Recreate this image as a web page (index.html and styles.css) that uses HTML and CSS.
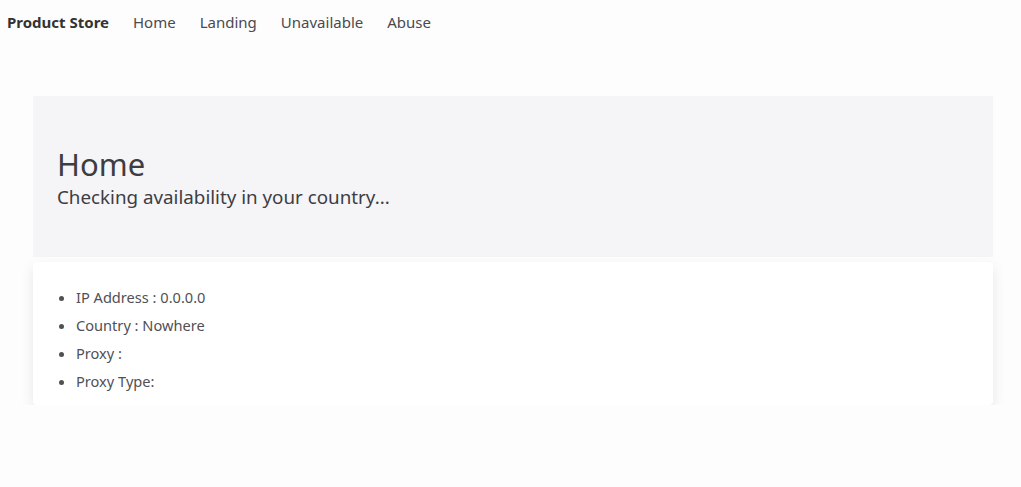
FILE: index.html
```html
<!DOCTYPE html>
<html lang="en">
<head>
<meta charset="utf-8">
<title>Product Store</title>
<link rel="stylesheet" href="styles.css">
</head>
<body>
<nav class="navbar">
  <a class="brand" href="#">Product Store</a>
  <a class="nav-link" href="#">Home</a>
  <a class="nav-link" href="#">Landing</a>
  <a class="nav-link" href="#">Unavailable</a>
  <a class="nav-link" href="#">Abuse</a>
</nav>
<main class="container">
  <section class="jumbotron">
    <h1 class="title">Home</h1>
    <p class="lead">Checking availability in your country...</p>
  </section>
  <section class="card">
    <ul class="info-list">
      <li>IP Address : 0.0.0.0</li>
      <li>Country : Nowhere</li>
      <li>Proxy :</li>
      <li>Proxy Type:</li>
    </ul>
  </section>
</main>
</body>
</html>
```

FILE: styles.css
```css
* { box-sizing: border-box; }
body {
  margin: 0;
  background: #fdfdfd;
  font-family: "Noto Sans", "Open Sans", sans-serif;
  color: #3f3f46;
}
.navbar {
  display: flex;
  align-items: center;
  height: 44px;
  padding: 0 7px;
  gap: 24px;
  font-size: 15px;
}
.navbar a { text-decoration: none; color: #4a4a4f; }
.brand { font-weight: 700; color: #333 !important; }
.container {
  padding: 52px 28px 0 33px;
}
.jumbotron {
  background: #f5f4f7;
  height: 161px;
  padding: 48px 24px 0;
}
.title {
  margin: 0;
  font-size: 31px;
  font-weight: 400;
  line-height: 40px;
  color: #3d3d42;
}
.lead {
  margin: 0;
  font-size: 18.8px;
  line-height: 26px;
  color: #3d3d42;
}
.card {
  margin-top: 5px;
  background: #fff;
  border-radius: 4px;
  box-shadow: 0 5px 14px rgba(0,0,0,0.09);
  padding: 21px 0 10px;
}
.info-list {
  margin: 0;
  padding-left: 43px;
  font-size: 14.6px;
  line-height: 28px;
  color: #505055;
}
```
